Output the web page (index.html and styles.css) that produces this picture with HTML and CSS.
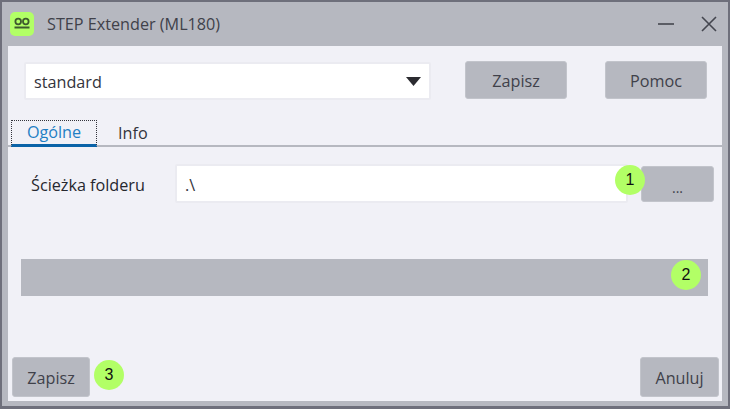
FILE: index.html
```html
<!DOCTYPE html>
<html lang="pl">
<head>
    <meta charset="UTF-8">
    <meta name="viewport" content="width=device-width, initial-scale=1.0">
    <title>STEP Extender (ML180)</title>
    <link rel="stylesheet" href="styles.css">
</head>
<body>

<div class="window">
    <div class="title-bar">
        <svg class="app-icon" width="24" height="24" viewBox="0 0 24 24">
            <rect x="0" y="0" width="24" height="24" rx="5" fill="#b2ff66"/>
            <circle cx="8.2" cy="9.5" r="2.8" fill="none" stroke="#3f5a2e" stroke-width="1.8"/>
            <circle cx="15.8" cy="9.5" r="2.8" fill="none" stroke="#3f5a2e" stroke-width="1.8"/>
            <path d="M4.5 15.5H19.5" stroke="#3f5a2e" stroke-width="2"/>
        </svg>
        <span class="title-text">STEP Extender (ML180)</span>
        <svg class="win-btn min" width="16" height="16" viewBox="0 0 16 16">
            <path d="M0 8H16" stroke="#44464f" stroke-width="1.6"/>
        </svg>
        <svg class="win-btn close" width="16" height="16" viewBox="0 0 16 16">
            <path d="M1 1L15 15M15 1L1 15" stroke="#44464f" stroke-width="1.6"/>
        </svg>
    </div>

    <div class="content">
        <div class="toolbar">
            <div class="combo">
                <span class="combo-text">standard</span>
                <svg width="15" height="9" viewBox="0 0 15 9"><path d="M0 0H15L7.5 9Z" fill="#2b2b30"/></svg>
            </div>
            <button class="btn btn-top btn-save">Zapisz</button>
            <button class="btn btn-top btn-help">Pomoc</button>
        </div>

        <div class="tabs">
            <div class="tab active">Ogólne</div>
            <div class="tab">Info</div>
        </div>

        <div class="folder-row">
            <label class="folder-label">Ścieżka folderu</label>
            <div class="folder-input">.\</div>
            <button class="btn btn-browse">...</button>
            <span class="badge badge-1">1</span>
        </div>

        <div class="bar">
            <span class="badge badge-2">2</span>
        </div>

        <div class="footer">
            <button class="btn btn-footer">Zapisz</button>
            <button class="btn btn-footer btn-cancel">Anuluj</button>
            <span class="badge badge-3">3</span>
        </div>
    </div>
</div>

</body>
</html>
```

FILE: styles.css
```css
* {
    box-sizing: border-box;
}
body {
    margin: 0;
    font-family: "Open Sans", "Noto Sans", Arial, sans-serif;
    font-size: 16.2px;
    color: #33343c;
    overflow: hidden;
}
.window {
    width: 730px;
    height: 409px;
    display: flex;
    flex-direction: column;
    background-color: #b6b8c0;
    border: 2px solid #6e6f7b;
    border-bottom-width: 3px;
    padding: 0 6px 5px 6px;
}
.title-bar {
    height: 44px;
    flex: none;
    display: flex;
    align-items: center;
    margin-left: -6px;
    margin-right: -6px;
    padding-left: 8px;
}
.title-bar .app-icon {
    flex: none;
}
.title-text {
    margin-left: 13px;
    font-size: 16.2px;
    color: #40414a;
}
.win-btn {
    flex: none;
}
.win-btn.min {
    margin-left: auto;
}
.win-btn.close {
    margin-left: 27px;
    margin-right: 11px;
}
.content {
    flex: 1;
    position: relative;
    display: flex;
    flex-direction: column;
    background-color: #f1f1f7;
}
.toolbar {
    display: flex;
    align-items: flex-start;
    padding: 15px 15px 0 16px;
    height: 74px;
    flex: none;
}
.combo {
    width: 407px;
    height: 38px;
    margin-top: 1px;
    display: flex;
    align-items: center;
    justify-content: space-between;
    padding: 0 8px 0 8px;
    background-color: #ffffff;
    border: 2px solid #ebebf1;
    border-radius: 2px;
}
.combo-text {
    padding-top: 2px;
}
.btn {
    display: block;
    padding: 2px 0 0 0;
    background-color: #b6b8c0;
    border: 1px solid #c2c4cb;
    border-radius: 3px;
    font-family: inherit;
    font-size: 16.2px;
    color: #40414a;
}
.btn-top {
    width: 102px;
    height: 38px;
}
.btn-save {
    margin-left: 34px;
}
.btn-help {
    margin-left: 38px;
}
.tabs {
    display: flex;
    flex: none;
    height: 27px;
    padding-left: 3px;
    border-bottom: 2px solid #b6b8c0;
}
.tab {
    height: 27px;
    padding-top: 1px;
    line-height: 24px;
    text-align: center;
}
.tab.active {
    width: 86px;
    color: #1f7fc4;
    border: 1px dotted #33343c;
    border-bottom: 3px solid #0a63a8;
    line-height: 23px;
    padding-top: 0;
}
.tab:not(.active) {
    margin-left: 21px;
}
.folder-row {
    display: flex;
    align-items: center;
    flex: none;
    margin-top: 17px;
    height: 39px;
    padding-left: 23px;
}
.folder-label {
    width: 144px;
    flex: none;
    padding-top: 3px;
    color: #26272e;
}
.folder-input {
    width: 453px;
    height: 39px;
    flex: none;
    padding-left: 8px;
    line-height: 39px;
    background-color: #ffffff;
    border: 2px solid #ebebf1;
    border-radius: 2px;
}
.btn-browse {
    width: 73px;
    height: 36px;
    margin-left: 13px;
    padding-top: 7px;
    font-size: 14px;
}
.bar {
    flex: none;
    margin: 56px 14px 0 13px;
    height: 37px;
    background-color: #b6b8c0;
}
.footer {
    margin-top: auto;
    display: flex;
    justify-content: space-between;
    padding: 0 3px 4px 4px;
}
.btn-footer {
    width: 78px;
    height: 40px;
}
.btn-cancel {
    width: 79px;
}
.badge {
    position: absolute;
    width: 30px;
    height: 30px;
    border-radius: 50%;
    background-color: #b2ff66;
    color: #111111;
    font-family: "Liberation Sans", Arial, sans-serif;
    font-size: 16px;
    line-height: 30px;
    text-align: center;
}
.badge-1 {
    left: 607px;
    top: 119px;
}
.badge-2 {
    left: 663px;
    top: 214px;
}
.badge-3 {
    left: 86px;
    top: 314px;
}
```
